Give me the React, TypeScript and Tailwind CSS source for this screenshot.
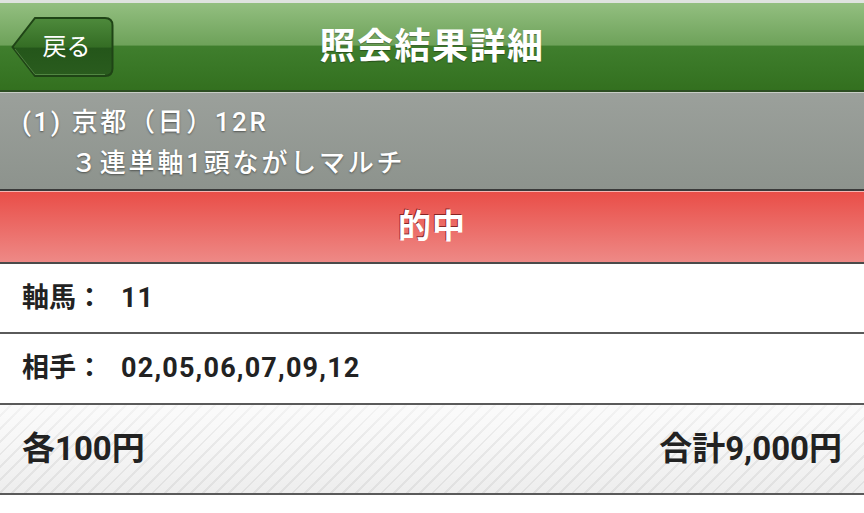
export default function App() {
  const font = { fontFamily: "Roboto, 'Noto Sans CJK JP', sans-serif" };

  return (
    <div className="w-[864px] h-[513px] bg-white overflow-hidden" style={font}>
      {/* header bar */}
      <div className="h-[3px] bg-[#dfe3df]" />
      <header className="relative h-[89px] flex items-center justify-center bg-[linear-gradient(to_bottom,#93bf80_0%,#6ea25a_48%,#3f7e2d_50%,#33701f_100%)] border-b-2 border-[#2c4d22]">
        <button className="absolute left-[11px] top-[13px] w-[103px] h-[62px] flex items-center justify-center pl-[8px]">
          <svg className="absolute inset-0" width="103" height="62" viewBox="0 0 103 62">
            <defs>
              <linearGradient id="back" x1="0" y1="0" x2="0" y2="1">
                <stop offset="0" stopColor="#4e8a3c" />
                <stop offset="0.5" stopColor="#346d24" />
                <stop offset="0.52" stopColor="#24561a" />
                <stop offset="1" stopColor="#2a5c1e" />
              </linearGradient>
            </defs>
            <path
              d="M1.5 31 L24 2 H94 Q101.5 2 101.5 9.5 V52.5 Q101.5 60 94 60 H24 Z"
              fill="url(#back)"
              stroke="#1f4416"
              strokeWidth="2"
            />
            <path d="M4 33 L24 58.5 H94" fill="none" stroke="#6da35a" strokeWidth="1" opacity="0.6" />
          </svg>
          <span className="relative text-white text-[24px] leading-none">戻る</span>
        </button>
        <h1 className="text-white text-[36px] font-bold tracking-[1.5px] [text-shadow:0_1px_1px_rgba(0,0,0,0.35)]">
          照会結果詳細
        </h1>
      </header>
      <div className="h-px bg-[#c8cec6]" />

      {/* race info */}
      <section className="h-[96px] bg-[linear-gradient(to_bottom,#9ba09b,#8d938d)] px-[22px] pt-[9px] text-white text-[26px] font-medium leading-[41px] [text-shadow:0_1px_2px_rgba(0,0,0,0.45)]">
        <div className="tracking-[2.6px]">(1) 京都（日）12R</div>
        <div className="pl-[49px] tracking-[2.8px]">３連単軸1頭ながしマルチ</div>
      </section>
      <div className="h-[2px] bg-[#3a3a3a]" />

      {/* result band */}
      <div className="h-px bg-[#f4b5b3]" />
      <div className="h-[70px] flex items-center justify-center bg-[linear-gradient(to_bottom,#e94e48,#ee8986)]">
        <span className="text-white text-[33px] font-bold tracking-[1px] [text-shadow:-1px_-1px_0_rgba(90,10,10,0.7)]">的中</span>
      </div>
      <div className="h-[2px] bg-[#4a4a4a]" />

      {/* selections */}
      <div className="h-[68px] flex items-center px-[22px] text-[#222] text-[27px] font-bold">
        <span>軸馬：</span>
        <span className="ml-[18px] tracking-[1px]">11</span>
      </div>
      <div className="h-[2px] bg-[#5a5a5a]" />
      <div className="h-[69px] flex items-center px-[22px] text-[#222] text-[27px] font-bold">
        <span>相手：</span>
        <span className="ml-[18px] tracking-[1.2px]">02,05,06,07,09,12</span>
      </div>
      <div className="h-[2px] bg-[#5a5a5a]" />

      {/* totals */}
      <div className="h-[88px] flex items-center justify-between px-[22px] text-[#222] text-[33px] font-bold bg-[image:linear-gradient(to_bottom,rgba(255,255,255,0.5),rgba(255,255,255,0)_40%,rgba(0,0,0,0.04)),repeating-linear-gradient(135deg,#f7f7f7_0px,#f7f7f7_7px,#e9e9e9_7px,#e9e9e9_9px)]">
        <span>各100円</span>
        <span>合計9,000円</span>
      </div>
      <div className="h-[2px] bg-[#5a5a5a]" />
    </div>
  );
}
